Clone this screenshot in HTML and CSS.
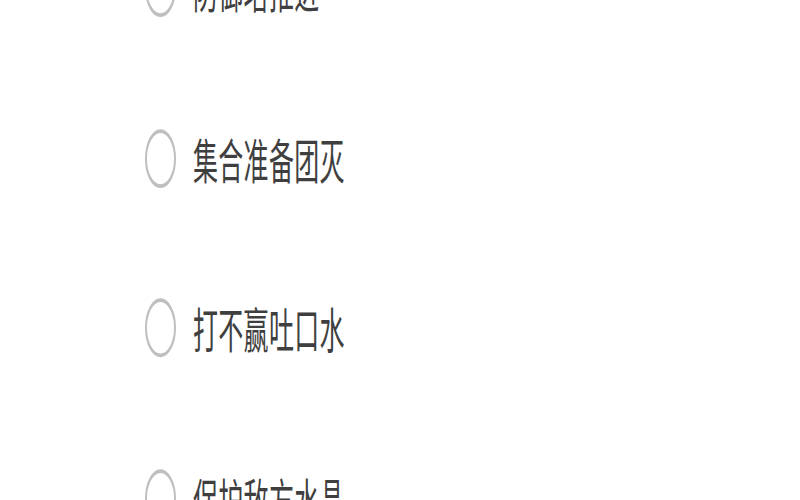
FILE: index.html
```html
<!DOCTYPE html>
<html lang="zh">
<head>
<meta charset="utf-8">
<link rel="stylesheet" href="styles.css">
</head>
<body>
<div class="stage">
  <ul class="options">
    <li class="option"><span class="radio"></span><span class="label">防御塔推进</span></li>
    <li class="option"><span class="radio"></span><span class="label">集合准备团灭</span></li>
    <li class="option"><span class="radio"></span><span class="label">打不赢吐口水</span></li>
    <li class="option"><span class="radio"></span><span class="label">保护敌方水晶</span></li>
  </ul>
</div>
</body>
</html>
```

FILE: styles.css
```css
html, body {
  margin: 0;
  padding: 0;
  background: #ffffff;
  overflow: hidden;
  width: 800px;
  height: 500px;
}

.stage {
  display: flow-root;
  width: 800px;
  height: 264px;
  overflow: hidden;
  transform: scaleY(1.9);
  transform-origin: 0 0;
}

.options {
  list-style: none;
  margin: -51px 0 0 0;
  padding: 0 0 0 145px;
}

.option {
  display: flex;
  align-items: center;
  height: 89.5px;
  gap: 17px;
}

.radio {
  box-sizing: border-box;
  width: 31px;
  height: 31px;
  border: 2.2px solid #bfbfbf;
  border-radius: 50%;
  flex: none;
}

.label {
  font-family: "Noto Sans CJK SC", "Noto Sans", sans-serif;
  font-size: 25px;
  line-height: 1;
  color: #3f3f3f;
  letter-spacing: 0.3px;
}
```
